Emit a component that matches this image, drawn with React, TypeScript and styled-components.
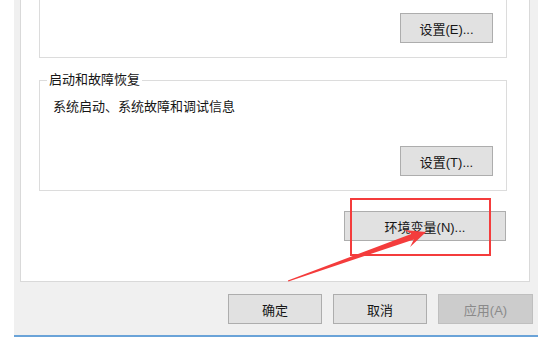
import React from "react";
import styled, { createGlobalStyle } from "styled-components";

const Global = createGlobalStyle`
  html, body { margin: 0; padding: 0; background: #ffffff; }
  * { box-sizing: border-box; }
  #root { width: 538px; height: 337px; overflow: hidden; }
`;

const FONT = `"Liberation Sans", "Noto Sans CJK SC", sans-serif`;

const Page = styled.div`
  position: relative;
  width: 538px;
  height: 337px;
  padding-left: 14px;
  background: #ffffff;
  font-family: ${FONT};
  font-size: 13px;
  color: #161616;
  overflow: hidden;
`;

const Dialog = styled.div`
  display: flex;
  flex-direction: column;
  height: 335px;
  background: #f0f0f0;
`;

const TaskBar = styled.div`
  height: 2px;
  background: #6aa3d8;
`;

const TabPage = styled.div`
  display: flex;
  flex-direction: column;
  margin-left: 6px;
  width: 510px;
  height: 282px;
  background: #ffffff;
  border: 1px solid #d9d9d9;
  border-top: none;
  padding: 0 22px 0 18px;
`;

const Group = styled.div<{ $open?: boolean; $height: number; $top: number }>`
  position: relative;
  display: flex;
  flex-direction: column;
  height: ${(p) => p.$height}px;
  margin-top: ${(p) => p.$top}px;
  border: 1px solid #dcdcdc;
  border-top: ${(p) => (p.$open ? "none" : "1px solid #dcdcdc")};
  padding: ${(p) => (p.$open ? "12px" : "18px")} 13px 14px 13px;
`;

const GroupLabel = styled.span`
  position: absolute;
  top: -10px;
  left: 7px;
  padding: 0 2px;
  background: #ffffff;
  line-height: 18px;
  white-space: nowrap;
`;

const Info = styled.div`
  line-height: 16px;
  white-space: nowrap;
`;

const ButtonRow = styled.div<{ $top?: number; $gap?: number; $pad?: number }>`
  display: flex;
  justify-content: flex-end;
  gap: ${(p) => p.$gap ?? 0}px;
  margin-top: ${(p) => (p.$top === undefined ? "auto" : `${p.$top}px`)};
  padding-right: ${(p) => p.$pad ?? 0}px;
`;

const Button = styled.button<{ $w: number; $disabled?: boolean }>`
  width: ${(p) => p.$w}px;
  height: 30px;
  padding: 0;
  font-family: ${FONT};
  font-size: 13px;
  color: ${(p) => (p.$disabled ? "#8a8a8a" : "#161616")};
  background: ${(p) => (p.$disabled ? "#cccccc" : "#e1e1e1")};
  border: 1px solid ${(p) => (p.$disabled ? "#bfbfbf" : "#adadad")};
  white-space: nowrap;
`;

const Highlight = styled.div`
  position: absolute;
  left: 350px;
  top: 198px;
  width: 141px;
  height: 58px;
  border: 2.5px solid #f43c3c;
  pointer-events: none;
`;

const Overlay = styled.svg`
  position: absolute;
  left: 0;
  top: 0;
  pointer-events: none;
`;

export default function App() {
  return (
    <Page>
      <Global />
      <Dialog>
        <TabPage>
          <Group $open $height={58} $top={0}>
            <ButtonRow>
              <Button $w={93}>设置(E)...</Button>
            </ButtonRow>
          </Group>
          <Group $height={111} $top={22}>
            <GroupLabel>启动和故障恢复</GroupLabel>
            <Info>系统启动、系统故障和调试信息</Info>
            <ButtonRow>
              <Button $w={93}>设置(T)...</Button>
            </ButtonRow>
          </Group>
          <ButtonRow $top={20} $pad={1}>
            <Button $w={162}>环境变量(N)...</Button>
          </ButtonRow>
        </TabPage>
        <ButtonRow $top={12} $gap={11} $pad={5}>
          <Button $w={94}>确定</Button>
          <Button $w={94}>取消</Button>
          <Button $w={95} $disabled>
            应用(A)
          </Button>
        </ButtonRow>
      </Dialog>
      <TaskBar />
      <Highlight />
      <Overlay width="538" height="337" viewBox="0 0 538 337">
        <polygon
          points="287.8,280.4 411.8,233.8 404.1,230.1 426,232 410.1,247.1 413.8,239.4 288.4,281.6"
          fill="#f43c3c"
        />
      </Overlay>
    </Page>
  );
}
